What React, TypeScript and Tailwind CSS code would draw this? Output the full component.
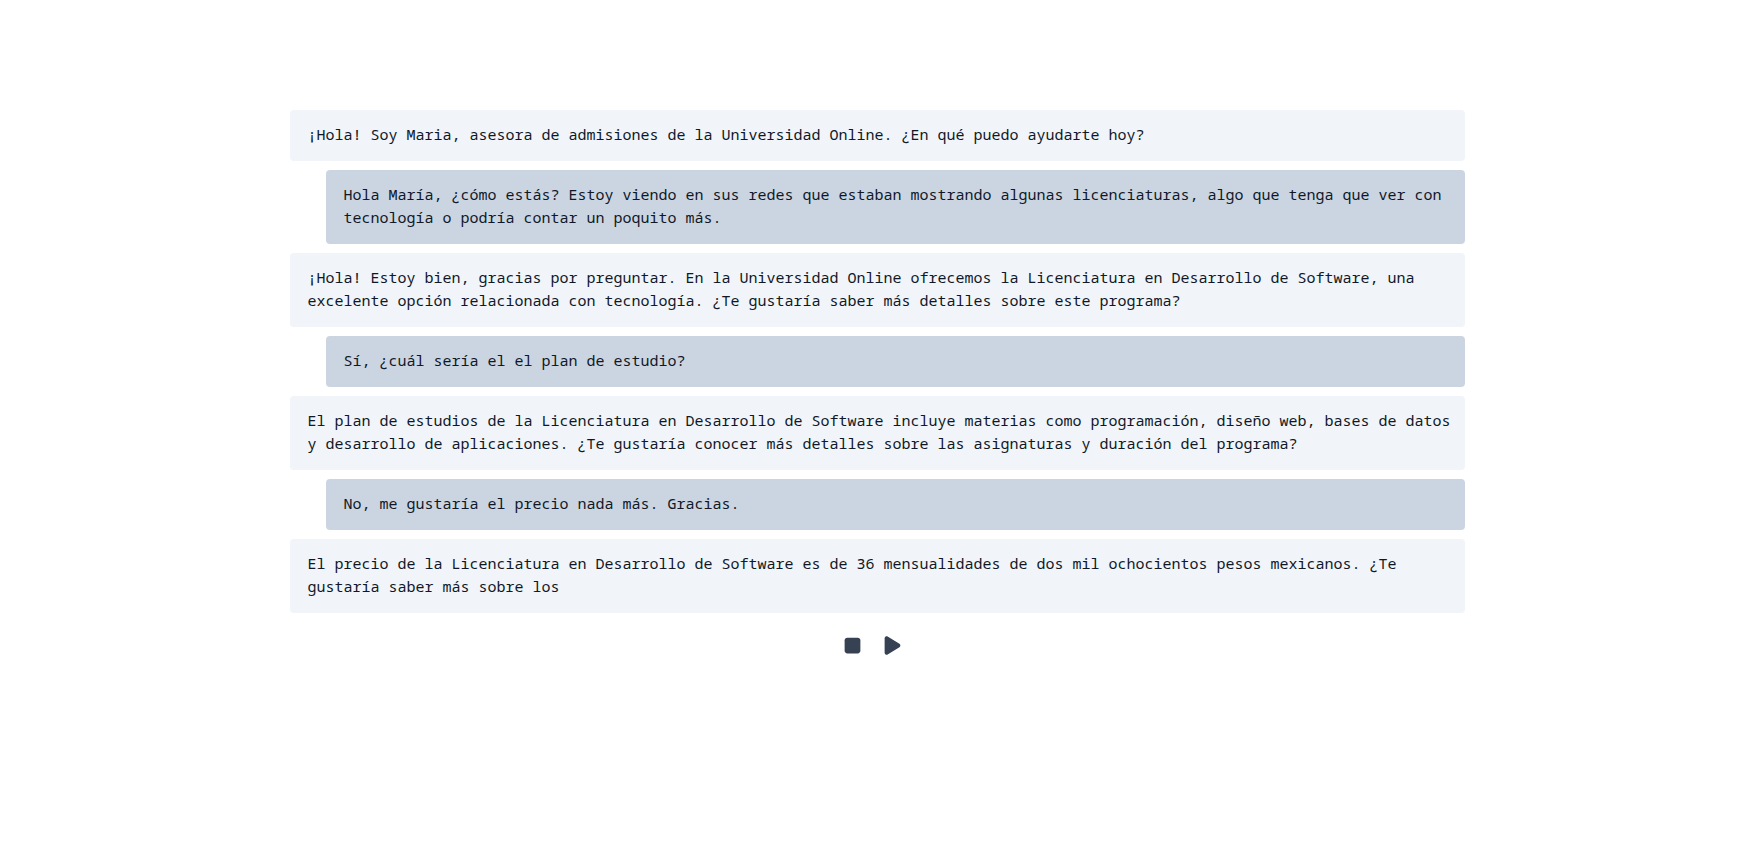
import { FaPlay, FaStop } from "react-icons/fa6";

type Message = { from: "agent" | "user"; text: string };

const messages: Message[] = [
  { from: "agent", text: "¡Hola! Soy Maria, asesora de admisiones de la Universidad Online. ¿En qué puedo ayudarte hoy?" },
  { from: "user", text: "Hola María, ¿cómo estás? Estoy viendo en sus redes que estaban mostrando algunas licenciaturas, algo que tenga que ver con tecnología o podría contar un poquito más." },
  { from: "agent", text: "¡Hola! Estoy bien, gracias por preguntar. En la Universidad Online ofrecemos la Licenciatura en Desarrollo de Software, una excelente opción relacionada con tecnología. ¿Te gustaría saber más detalles sobre este programa?" },
  { from: "user", text: "Sí, ¿cuál sería el el plan de estudio?" },
  { from: "agent", text: "El plan de estudios de la Licenciatura en Desarrollo de Software incluye materias como programación, diseño web, bases de datos y desarrollo de aplicaciones. ¿Te gustaría conocer más detalles sobre las asignaturas y duración del programa?" },
  { from: "user", text: "No, me gustaría el precio nada más. Gracias." },
  { from: "agent", text: "El precio de la Licenciatura en Desarrollo de Software es de 36 mensualidades de dos mil ochocientos pesos mexicanos. ¿Te gustaría saber más sobre los" },
];

function Bubble({ from, text }: Message) {
  const tone = from === "user" ? "ml-9 bg-[#cbd5e1]" : "bg-[#f1f5f9]";
  return <li className={`rounded pt-[13px] pr-3 pb-[15px] pl-[18px] ${tone}`}>{text}</li>;
}

export default function App() {
  return (
    <main className="min-h-screen bg-white pt-[110px] pb-10">
      <div className="mx-auto w-[67%]">
        <ul className="flex flex-col gap-[9px] font-['Noto_Sans_Mono','Liberation_Mono',monospace] text-[15px] leading-[23px] text-gray-900">
          {messages.map((message, index) => (
            <Bubble key={index} {...message} />
          ))}
        </ul>
        <div className="mt-3 flex justify-center pr-[10px] text-[21px] text-gray-700">
          <button type="button" aria-label="Detener" className="flex size-10 items-center justify-center">
            <FaStop />
          </button>
          <button type="button" aria-label="Reproducir" className="flex size-10 items-center justify-center">
            <FaPlay />
          </button>
        </div>
      </div>
    </main>
  );
}
